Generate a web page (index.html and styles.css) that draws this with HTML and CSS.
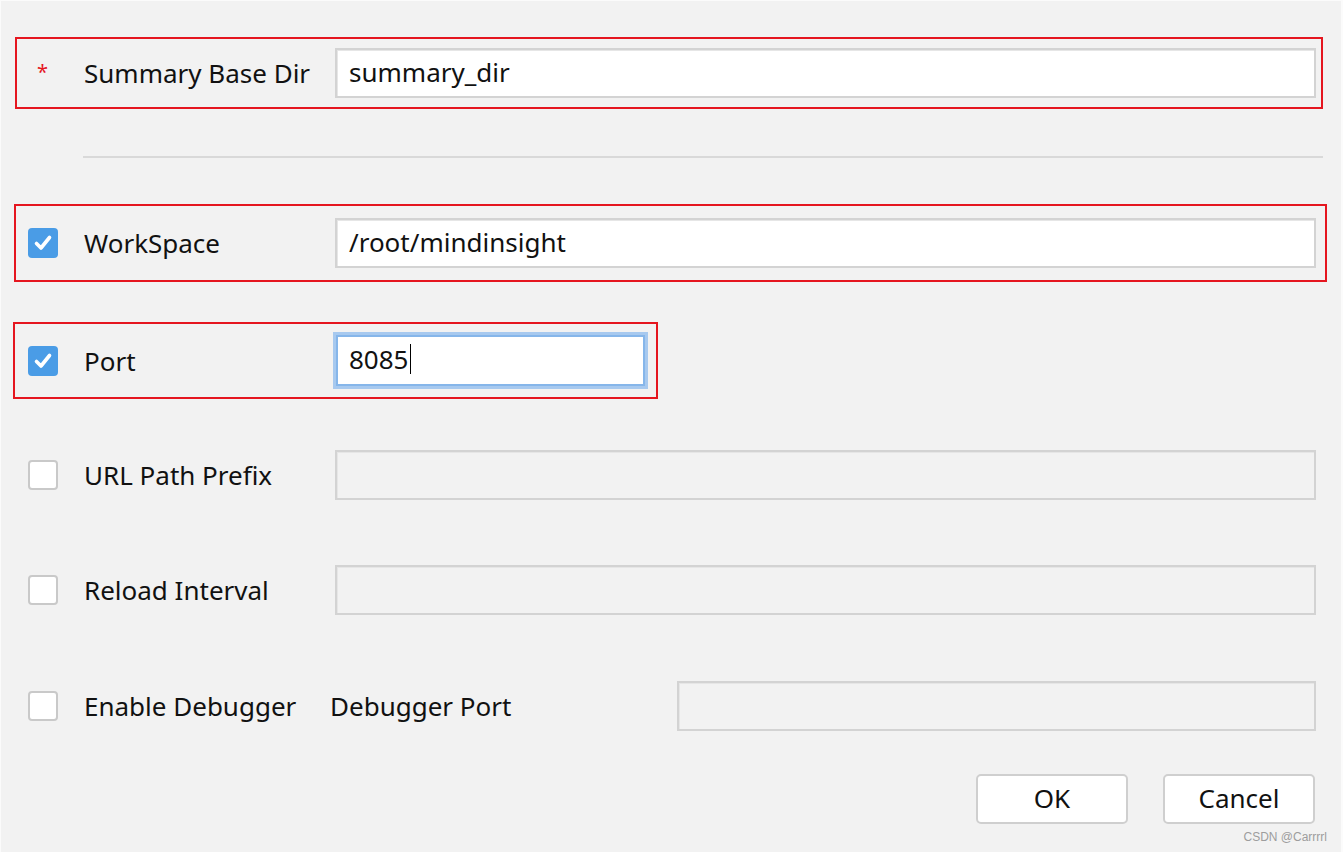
FILE: index.html
```html
<!DOCTYPE html>
<html>
<head>
<meta charset="utf-8">
<link rel="stylesheet" href="styles.css">
</head>
<body>
<div class="page">
  <div class="row boxed box-summary">
    <span class="mark"><span class="asterisk">*</span></span>
    <span class="label">Summary Base Dir</span>
    <span class="field"><span class="input">summary_dir</span></span>
  </div>

  <div class="separator"></div>

  <div class="row boxed box-workspace">
    <span class="mark"><span class="check checked"><svg viewBox="0 0 30 30" width="30" height="30"><path d="M8.5 15.5 L13 20 L21.5 9.5" fill="none" stroke="#fff" stroke-width="3.6" stroke-linecap="round" stroke-linejoin="round"/></svg></span></span>
    <span class="label">WorkSpace</span>
    <span class="field"><span class="input">/root/mindinsight</span></span>
  </div>

  <div class="row boxed box-port">
    <span class="mark"><span class="check checked"><svg viewBox="0 0 30 30" width="30" height="30"><path d="M8.5 15.5 L13 20 L21.5 9.5" fill="none" stroke="#fff" stroke-width="3.6" stroke-linecap="round" stroke-linejoin="round"/></svg></span></span>
    <span class="label">Port</span>
    <span class="field-port"><span class="input focused">8085<span class="caret"></span></span></span>
  </div>

  <div class="row plain row-url">
    <span class="mark"><span class="check"></span></span>
    <span class="label">URL Path Prefix</span>
    <span class="field"><span class="input disabled"></span></span>
  </div>

  <div class="row plain row-reload">
    <span class="mark"><span class="check"></span></span>
    <span class="label">Reload Interval</span>
    <span class="field"><span class="input disabled"></span></span>
  </div>

  <div class="row plain row-debug">
    <span class="mark"><span class="check"></span></span>
    <span class="label label-debug">Enable Debugger</span>
    <span class="label label-port">Debugger Port</span>
    <span class="field-debug"><span class="input disabled"></span></span>
  </div>

  <div class="buttons">
    <button class="btn">OK</button>
    <button class="btn">Cancel</button>
  </div>
  <div class="watermark">CSDN @Carrrrl</div>
</div>
</body>
</html>
```
FILE: styles.css
```css
* { box-sizing: border-box; }
html, body { margin: 0; padding: 0; }
body {
  background: #f2f2f2;
  font-family: "Noto Sans", "Open Sans", sans-serif;
  color: #111;
}
.page {
  width: 1343px;
  height: 852px;
  border-left: 1px solid #fbfbfb;
  border-top: 1px solid #fbfbfb;
  border-right: 2px solid #fbfbfb;
  position: relative;
  overflow: hidden;
}
.row {
  display: flex;
  align-items: center;
}
.boxed { border: 2px solid #e5161f; }
.box-summary {
  margin: 36px 0 0 14px;
  width: 1308px;
  height: 72px;
  padding-left: 11px;
}
.separator {
  margin: 47px 0 0 82px;
  width: 1240px;
  height: 2px;
  background: #d9d9d9;
}
.box-workspace {
  margin: 46px 0 0 13px;
  width: 1313px;
  height: 78px;
  padding-left: 12px;
}
.box-port {
  margin: 40px 0 0 12px;
  width: 645px;
  height: 77px;
  padding-left: 13px;
}
.plain { padding-left: 27px; height: 50px; }
.row-url { margin-top: 51px; }
.row-reload { margin-top: 65px; }
.row-debug { margin-top: 66px; }

.mark {
  width: 56px;
  flex: none;
  display: flex;
  align-items: center;
}
.asterisk {
  color: #e5161f;
  font-size: 20px;
  margin-left: 9px;
  margin-top: -4px;
}
.label {
  width: 251px;
  flex: none;
  font-size: 26px;
  line-height: 30px;
  white-space: nowrap;
  margin-top: 0;
}
.label-debug { width: 246px; }
.label-port { width: 347px; }
.field { width: 981px; flex: none; }
.field-port { width: 315px; flex: none; margin-left: -2px; }
.field-debug { width: 639px; flex: none; }

.check {
  width: 30px;
  height: 30px;
  border-radius: 4px;
  background: #fff;
  border: 2px solid #c9c9c9;
  display: block;
}
.check.checked {
  background: #4a9ce6;
  border: none;
}
.check svg { display: block; }

.input {
  display: flex;
  align-items: center;
  height: 50px;
  background: #fff;
  border: 2px solid #d3d3d3;
  box-shadow: inset 1px 1px 0 #e6e6e6;
  padding-left: 12px;
  padding-bottom: 3px;
  font-size: 26px;
  color: #111;
}
.input.disabled { background: #f2f2f2; }
.input.focused {
  height: 57px;
  border: 3px solid #a7c9ef;
  box-shadow: inset 0 0 0 2px #86b6ea;
  padding-left: 13px;
}
.caret {
  display: inline-block;
  width: 1.5px;
  height: 30px;
  background: #000;
  margin-left: 1px;
}

.buttons {
  display: flex;
  justify-content: flex-end;
  gap: 35px;
  margin: 43px 26px 0 0;
}
.btn {
  width: 152px;
  height: 50px;
  background: #fff;
  border: 2px solid #cfcfcf;
  border-radius: 5px;
  font-family: "Noto Sans", "Open Sans", sans-serif;
  font-size: 26px;
  color: #111;
  padding: 0 0 2px;
}
.watermark {
  position: absolute;
  right: 14px;
  bottom: 8px;
  font-family: "Liberation Sans", Arial, sans-serif;
  font-size: 12px;
  color: #9d9d9d;
}
```
